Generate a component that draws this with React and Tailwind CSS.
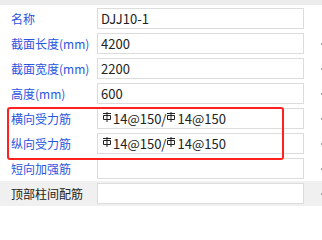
import React from "react";

function Bar() {
  return (
    <svg width="10" height="10" viewBox="0 0 10 10" className="inline-block align-top mt-[0px] mr-[1px]" fill="none" stroke="#222" strokeWidth="1">
      <path d="M1 1.5 H9" />
      <path d="M5 0 V10" />
      <path d="M1.5 3.5 H8.5 V7.5 H1.5 Z" />
    </svg>
  );
}

function Rebar() {
  return (
    <span className="inline-flex items-start pl-[1px]">
      <Bar />
      <span>14@150/</span>
      <Bar />
      <span>14@150</span>
    </span>
  );
}

var rows = [
  { label: "名称", value: "DJJ10-1" },
  { label: "截面长度(mm)", value: "4200" },
  { label: "截面宽度(mm)", value: "2200" },
  { label: "高度(mm)", value: "600" },
  { label: "横向受力筋", rebar: true },
  { label: "纵向受力筋", rebar: true },
  { label: "短向加强筋", value: "" },
  { label: "顶部柱间配筋", value: "", dark: true },
];

export default function App() {
  return (
    <div
      className="relative w-[322px] h-[207px] bg-white overflow-hidden text-[12px] text-[#222]"
      style={{ fontFamily: '"Noto Sans CJK SC", "Noto Sans", sans-serif' }}
    >
      <div className="h-[5px] bg-[#ececec]"></div>
      <div className="pt-[1px]">
        {rows.map(function (r, i) {
          return (
            <div
              key={i}
              className={`flex items-center h-[25px] ${r.dark ? "bg-[#f0f0f0]" : ""}`}
            >
              <div
                className={`w-[97px] pl-[11px] whitespace-nowrap ${
                  r.dark ? "text-[#222]" : "text-[#2a55e0]"
                }`}
              >
                {r.label}
              </div>
              <div className="w-[207px] h-[21px] border border-[#dcdcdc] bg-white flex items-center pl-[3px] leading-none whitespace-nowrap text-[13px]">
                {r.rebar ? <Rebar /> : r.value}
              </div>
              <div className="flex-1 flex justify-end">
                {i > 0 ? <div className="w-[1px] h-[2px] bg-[#a0a0a0]"></div> : null}
              </div>
            </div>
          );
        })}
      </div>
      <div className="absolute left-[7px] top-[107px] w-[277px] h-[53px] border-2 border-[#ff2020] rounded-[3px]"></div>
    </div>
  );
}
